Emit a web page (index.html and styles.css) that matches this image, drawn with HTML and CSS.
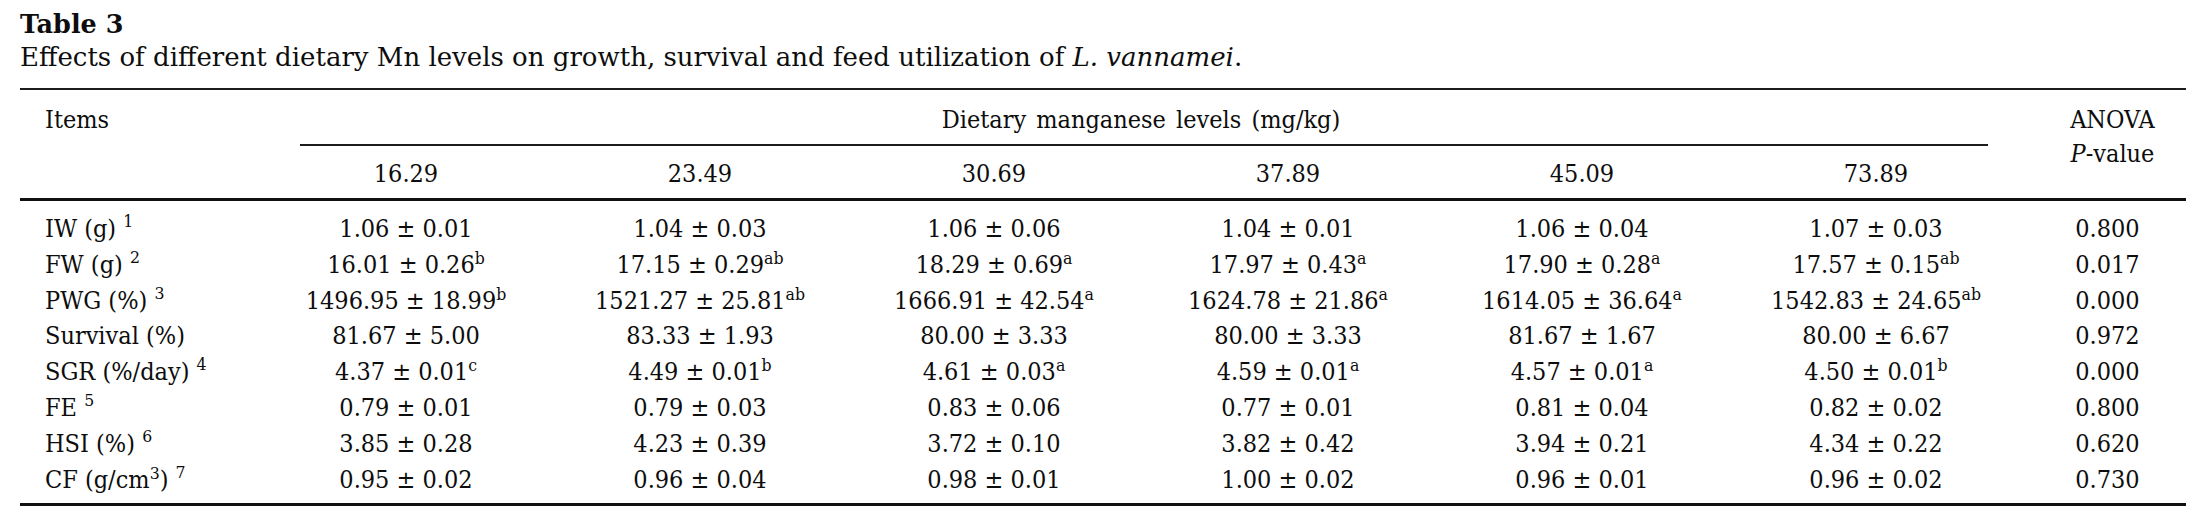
FILE: index.html
```html
<!DOCTYPE html>
<html lang="en">
<head>
<meta charset="utf-8">
<title>Table 3</title>
<link rel="stylesheet" href="styles.css">
</head>
<body>
<main class="page">
  <h1 class="title">Table 3</h1>
  <p class="caption">Effects of different dietary Mn levels on growth, survival and feed utilization of <i>L. vannamei</i>.</p>
  <section class="tbl">
    <div class="thead">
      <div class="h-items">Items</div>
      <div class="h-group">Dietary manganese levels (mg/kg)</div>
      <div class="h-anova">ANOVA<br><i>P</i>-value</div>
      <div class="h-rule"></div>
      <div class="h-num">16.29</div>
      <div class="h-num">23.49</div>
      <div class="h-num">30.69</div>
      <div class="h-num">37.89</div>
      <div class="h-num">45.09</div>
      <div class="h-num">73.89</div>
    </div>
    <div class="tbody">
      <div class="lbl">IW (g) <sup class="fn">1</sup></div>
      <div class="val">1.06 ± 0.01</div>
      <div class="val">1.04 ± 0.03</div>
      <div class="val">1.06 ± 0.06</div>
      <div class="val">1.04 ± 0.01</div>
      <div class="val">1.06 ± 0.04</div>
      <div class="val">1.07 ± 0.03</div>
      <div class="pv">0.800</div>

      <div class="lbl">FW (g) <sup class="fn">2</sup></div>
      <div class="val">16.01 ± 0.26<sup class="sig">b</sup></div>
      <div class="val">17.15 ± 0.29<sup class="sig">ab</sup></div>
      <div class="val">18.29 ± 0.69<sup class="sig">a</sup></div>
      <div class="val">17.97 ± 0.43<sup class="sig">a</sup></div>
      <div class="val">17.90 ± 0.28<sup class="sig">a</sup></div>
      <div class="val">17.57 ± 0.15<sup class="sig">ab</sup></div>
      <div class="pv">0.017</div>

      <div class="lbl">PWG (%) <sup class="fn">3</sup></div>
      <div class="val">1496.95 ± 18.99<sup class="sig">b</sup></div>
      <div class="val">1521.27 ± 25.81<sup class="sig">ab</sup></div>
      <div class="val">1666.91 ± 42.54<sup class="sig">a</sup></div>
      <div class="val">1624.78 ± 21.86<sup class="sig">a</sup></div>
      <div class="val">1614.05 ± 36.64<sup class="sig">a</sup></div>
      <div class="val">1542.83 ± 24.65<sup class="sig">ab</sup></div>
      <div class="pv">0.000</div>

      <div class="lbl">Survival (%)</div>
      <div class="val">81.67 ± 5.00</div>
      <div class="val">83.33 ± 1.93</div>
      <div class="val">80.00 ± 3.33</div>
      <div class="val">80.00 ± 3.33</div>
      <div class="val">81.67 ± 1.67</div>
      <div class="val">80.00 ± 6.67</div>
      <div class="pv">0.972</div>

      <div class="lbl">SGR (%/day) <sup class="fn">4</sup></div>
      <div class="val">4.37 ± 0.01<sup class="sig">c</sup></div>
      <div class="val">4.49 ± 0.01<sup class="sig">b</sup></div>
      <div class="val">4.61 ± 0.03<sup class="sig">a</sup></div>
      <div class="val">4.59 ± 0.01<sup class="sig">a</sup></div>
      <div class="val">4.57 ± 0.01<sup class="sig">a</sup></div>
      <div class="val">4.50 ± 0.01<sup class="sig">b</sup></div>
      <div class="pv">0.000</div>

      <div class="lbl">FE <sup class="fn">5</sup></div>
      <div class="val">0.79 ± 0.01</div>
      <div class="val">0.79 ± 0.03</div>
      <div class="val">0.83 ± 0.06</div>
      <div class="val">0.77 ± 0.01</div>
      <div class="val">0.81 ± 0.04</div>
      <div class="val">0.82 ± 0.02</div>
      <div class="pv">0.800</div>

      <div class="lbl">HSI (%) <sup class="fn">6</sup></div>
      <div class="val">3.85 ± 0.28</div>
      <div class="val">4.23 ± 0.39</div>
      <div class="val">3.72 ± 0.10</div>
      <div class="val">3.82 ± 0.42</div>
      <div class="val">3.94 ± 0.21</div>
      <div class="val">4.34 ± 0.22</div>
      <div class="pv">0.620</div>

      <div class="lbl">CF (g/cm<sup class="unit">3</sup>) <sup class="fn">7</sup></div>
      <div class="val">0.95 ± 0.02</div>
      <div class="val">0.96 ± 0.04</div>
      <div class="val">0.98 ± 0.01</div>
      <div class="val">1.00 ± 0.02</div>
      <div class="val">0.96 ± 0.01</div>
      <div class="val">0.96 ± 0.02</div>
      <div class="pv">0.730</div>
    </div>
  </section>
</main>
</body>
</html>
```
FILE: styles.css
```css
html, body {
  margin: 0;
  padding: 0;
  background: #ffffff;
}

.page {
  padding: 9px 22px 0 20px;
  color: #0d0d0d;
  font-family: "DejaVu Serif", "Liberation Serif", serif;
}

.title {
  margin: 0;
  font-size: 25.5px;
  font-weight: bold;
  line-height: 30px;
}

.caption {
  margin: 1px 0 0 0;
  font-size: 26px;
  line-height: 34px;
}

.tbl {
  margin-top: 14px;
  font-family: "DejaVu Serif Condensed", "DejaVu Serif", serif;
  font-stretch: condensed;
  font-size: 25px;
}

.thead {
  display: grid;
  grid-template-columns: 239px repeat(6, 294px) 163px;
  grid-template-rows: 35.8px 18px 35.8px;
  padding: 12px 0 6.4px 0;
  border-top: 2px solid #1c1c1c;
  border-bottom: 3px solid #111;
  line-height: 35.8px;
}

.h-items {
  grid-column: 1;
  grid-row: 1 / 4;
  align-self: start;
  padding-left: 25px;
}

.h-group {
  grid-column: 2 / 8;
  grid-row: 1;
  text-align: center;
  word-spacing: 3px;
}

.h-anova {
  grid-column: 8;
  grid-row: 1 / 4;
  text-align: center;
  line-height: 34px;
  padding: 1px 0 0 16px;
}

.h-rule {
  grid-column: 2 / 8;
  grid-row: 2;
  align-self: start;
  height: 2px;
  margin: 6px 35px 0 41px;
  background: #1c1c1c;
}

.h-num {
  grid-row: 3;
  text-align: center;
}

.tbody {
  display: grid;
  grid-template-columns: 239px repeat(6, 294px) 163px;
  grid-auto-rows: 35.8px;
  padding: 10px 0 5.6px 0;
  border-bottom: 3px solid #111;
  line-height: 35.8px;
}

.lbl {
  padding-left: 25px;
  white-space: nowrap;
}

.val {
  text-align: center;
  white-space: nowrap;
}

.pv {
  text-align: center;
  padding-left: 6px;
}

.fn {
  font-size: 0.7em;
  line-height: 0;
  vertical-align: 0.58em;
}

.sig {
  font-size: 0.7em;
  line-height: 0;
  vertical-align: 0.5em;
}

.unit {
  font-size: 0.7em;
  line-height: 0;
  vertical-align: 0.5em;
}
```
